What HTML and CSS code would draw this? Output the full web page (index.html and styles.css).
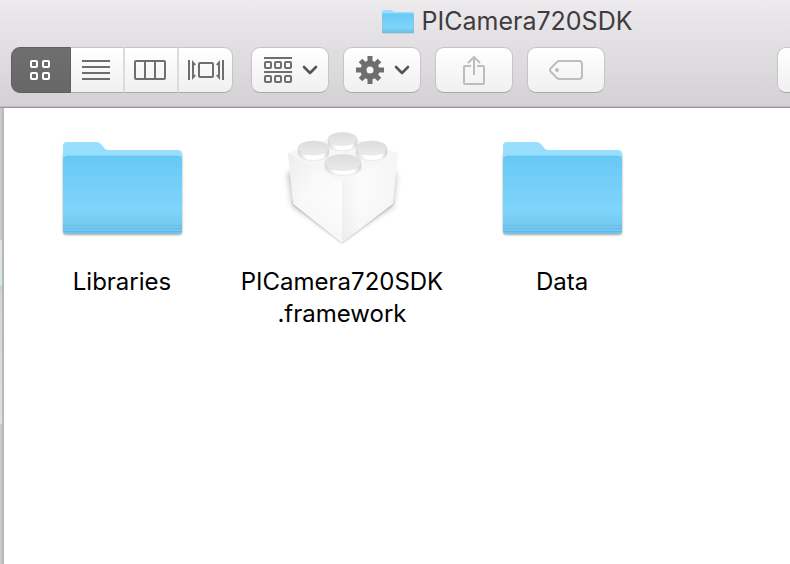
FILE: index.html
```html
<!DOCTYPE html>
<html lang="en">
<head>
<meta charset="utf-8">
<title>PICamera720SDK</title>
<link rel="stylesheet" href="styles.css">
</head>
<body>
<svg class="defs" aria-hidden="true">
  <defs>
    <linearGradient id="front" x1="0" y1="0" x2="0" y2="1">
      <stop offset="0" stop-color="#68c9f5"/>
      <stop offset=".7" stop-color="#7fd4fa"/>
      <stop offset="1" stop-color="#6fc3ec"/>
    </linearGradient>
    <linearGradient id="left" x1="0" y1="0" x2="1" y2="1">
      <stop offset="0" stop-color="#ececec"/>
      <stop offset=".4" stop-color="#f9f9f9"/>
      <stop offset="1" stop-color="#fff"/>
    </linearGradient>
    <linearGradient id="right" x1="0" y1="0" x2="1" y2="0">
      <stop offset="0" stop-color="#f2f2f2"/>
      <stop offset=".3" stop-color="#fcfcfc"/>
      <stop offset="1" stop-color="#f5f5f5"/>
    </linearGradient>
    <linearGradient id="foot" x1="0" y1="0" x2="0" y2="1">
      <stop offset=".5" stop-color="#ddd" stop-opacity="0"/>
      <stop offset="1" stop-color="#d6d6d6" stop-opacity=".6"/>
    </linearGradient>
    <linearGradient id="stud" x1="0" y1="0" x2="0" y2="1">
      <stop offset="0" stop-color="#dcdcdc"/>
      <stop offset="1" stop-color="#ebebeb"/>
    </linearGradient>
    <linearGradient id="side" x1="0" y1="0" x2="1" y2="0">
      <stop offset="0" stop-color="#d6d6d6"/>
      <stop offset=".3" stop-color="#fff"/>
      <stop offset=".8" stop-color="#fff"/>
      <stop offset="1" stop-color="#cecece"/>
    </linearGradient>
    <filter id="soft" x="-20%" y="-20%" width="140%" height="140%"><feGaussianBlur stdDeviation="3"/></filter>
    <filter id="edge" x="-20%" y="-20%" width="140%" height="140%"><feGaussianBlur stdDeviation="1"/></filter>
    <symbol id="folder" viewBox="0 0 128 128">
      <path d="M5 30h119v78q0 3-3 3H8q-3 0-3-3z" fill="#000" opacity=".35" filter="url(#edge)"/>
      <path d="M5 36V22q0-4 4-4h29q3 0 5 2l4 5q1 1 4 1h69q4 0 4 4v10H5z" fill="#98deff"/>
      <path d="M5 36q0-4 4-4h111q4 0 4 4v71q0 3-4 3H9q-4 0-4-3z" fill="url(#front)"/>
      <path d="M6 35q1-3 4-3h109q3 0 4 3" fill="none" stroke="#62bfe9" opacity=".6"/>
      <path d="M5 101.500h119M5 104.500h119M5 107.500h119" stroke="#58afd8" opacity=".45"/>
    </symbol>
    <symbol id="brick" viewBox="0 0 128 128">
      <path d="M10 48L15 82l49 32 51-32 3-34z" fill="#000" opacity=".28" filter="url(#soft)"/>
      <path d="M15 80l49 39 51-39-1-4H15z" fill="#000" opacity=".35" filter="url(#edge)"/>
      <path d="M10 29L64 10l56 19-56 30z" fill="#f6f6f6"/>
      <path d="M10 29l54 29v61L15 80z" fill="url(#left)"/>
      <path d="M120 29L64 58v61l51-39z" fill="url(#right)"/>
      <path d="M10 29l54 29 56-29-5 51-51 39-49-39z" fill="url(#foot)" opacity=".35"/>
      <g stroke="#d8d8d8" stroke-width=".5">
        <path d="M50 15v5c0 9 29 9 29 0v-5z" fill="url(#side)"/>
        <ellipse cx="64.500" cy="15" rx="14.500" ry="6.500" fill="url(#stud)"/>
        <path d="M20 24v5c0 10 31 10 31 0v-5z" fill="url(#side)"/>
        <ellipse cx="35.500" cy="24" rx="15.500" ry="7" fill="url(#stud)"/>
        <path d="M78 24v5c0 10 31 10 31 0v-5z" fill="url(#side)"/>
        <ellipse cx="93.500" cy="24" rx="15.500" ry="7" fill="url(#stud)"/>
        <path d="M47 38v5c0 11 36 11 36 0v-5z" fill="url(#side)"/>
        <ellipse cx="65" cy="38.500" rx="18" ry="8" fill="url(#stud)"/>
      </g>
    </symbol>
    <symbol id="chevron" viewBox="0 0 16 10"><path d="M2 2l6 6 6-6" fill="none" stroke="#555" stroke-width="2.600" stroke-linecap="round" stroke-linejoin="round"/></symbol>
  </defs>
</svg>

<header class="titlebar">
  <h1 class="title">
    <svg class="title-icon" viewBox="4 14 121 100" preserveAspectRatio="none" aria-hidden="true"><use href="#folder" width="128" height="128"/></svg>
    PICamera720SDK
  </h1>
  <div class="toolbar">
    <div class="segments">
      <button class="segment active" type="button" aria-label="Icon view">
        <svg width="20" height="20" viewBox="0 0 20 20" fill="none" stroke="#fff" stroke-width="2"><rect x="1" y="1" width="6" height="6" rx="1"/><rect x="13" y="1" width="6" height="6" rx="1"/><rect x="1" y="13" width="6" height="6" rx="1"/><rect x="13" y="13" width="6" height="6" rx="1"/></svg>
      </button>
      <button class="segment" type="button" aria-label="List view">
        <svg width="28" height="20" viewBox="0 0 28 20" stroke="#6e6e6e" stroke-width="2"><path d="M0 1h28M0 7h28M0 13h28M0 19h28"/></svg>
      </button>
      <button class="segment" type="button" aria-label="Column view">
        <svg width="32" height="20" viewBox="0 0 32 20" fill="none" stroke="#6e6e6e" stroke-width="2"><rect x="1" y="1" width="30" height="18" rx="1"/><path d="M11 1v18M21 1v18"/></svg>
      </button>
      <button class="segment" type="button" aria-label="Cover Flow">
        <svg width="36" height="20" viewBox="0 0 36 20" fill="none" stroke="#6e6e6e" stroke-width="2"><path d="M1 0v20M35 0v20"/><rect x="11" y="3" width="14" height="14" rx="1"/><path d="M4 0l4 4.500-2 1v9l2 1L4 20zM32 0l-4 4.500 2 1v9l-2 1 4 4.500z" fill="#6e6e6e" stroke="none"/></svg>
      </button>
    </div>
    <button class="button menu" type="button" aria-label="Arrange items">
      <svg width="28" height="26" viewBox="0 0 28 26" fill="none" stroke="#6e6e6e" stroke-width="2"><path d="M0 1h28M0 15h28"/><rect x="1" y="5" width="6" height="6" rx="1"/><rect x="11" y="5" width="6" height="6" rx="1"/><rect x="21" y="5" width="6" height="6" rx="1"/><rect x="1" y="19" width="6" height="6" rx="1"/><rect x="11" y="19" width="6" height="6" rx="1"/><rect x="21" y="19" width="6" height="6" rx="1"/></svg>
      <svg width="16" height="10"><use href="#chevron"/></svg>
    </button>
    <button class="button menu" type="button" aria-label="Action">
      <svg width="28" height="28" viewBox="0 0 28 28"><g stroke="#6e6e6e" stroke-width="5"><path d="M14 0v9M14 19v9M0 14h9M19 14h9"/><path d="M4.500 4.500l6 6M17.500 17.500l6 6M23.500 4.500l-6 6M10.500 17.500l-6 6"/></g><circle cx="14" cy="14" r="6.500" fill="none" stroke="#6e6e6e" stroke-width="6"/></svg>
      <svg width="16" height="10"><use href="#chevron"/></svg>
    </button>
    <button class="button" type="button" aria-label="Share" disabled>
      <svg width="22" height="30" viewBox="0 0 22 30" fill="none" stroke="#bdbdbd" stroke-width="2"><path d="M8 11H2q-1 0-1 1v16q0 1 1 1h18q1 0 1-1V12q0-1-1-1h-6M11 20V2M5 8l6-6 6 6"/></svg>
    </button>
    <button class="button" type="button" aria-label="Tags" disabled>
      <svg width="34" height="20" viewBox="0 0 34 20" fill="none" stroke="#bdbdbd" stroke-width="2"><path d="M11 1h19q3 0 3 3v12q0 3-3 3H11q-2 0-3-1l-6-6q-2-2 0-4l6-6q1-1 3-1z"/><circle cx="8" cy="10" r="2" fill="#bdbdbd" stroke="none"/></svg>
    </button>
    <input class="search" type="search" aria-label="Search">
  </div>
</header>
<div class="window">
  <div class="backdrop"></div>
  <main class="files">
    <figure class="file"><svg class="file-icon" aria-hidden="true"><use href="#folder"/></svg><figcaption>Libraries</figcaption></figure>
    <figure class="file"><svg class="file-icon" aria-hidden="true"><use href="#brick"/></svg><figcaption>PICamera720SDK<br>.framework</figcaption></figure>
    <figure class="file"><svg class="file-icon" aria-hidden="true"><use href="#folder"/></svg><figcaption>Data</figcaption></figure>
  </main>
</div>
</body>
</html>
```
FILE: styles.css
```css
* {
  box-sizing: border-box;
}

body {
  margin: 0;
  min-height: 100vh;
  display: flex;
  flex-direction: column;
  background: #fff;
  color: #000;
  font-family: Inter, Roboto, sans-serif;
}

.defs {
  position: absolute;
  width: 0;
  height: 0;
}

.titlebar {
  background: linear-gradient(#eceaec, #d3d1d3);
  border-bottom: 1px solid #979597;
  box-shadow: inset 0 -1px #bebcbe;
}

.title {
  display: flex;
  align-items: center;
  justify-content: center;
  gap: 8px;
  height: 42px;
  margin: 0;
  padding-left: 224px;
  color: #3e3c3e;
  font-size: 25px;
  font-weight: 400;
  white-space: nowrap;
}

.title-icon {
  width: 32px;
  height: 25px;
}

.toolbar {
  display: flex;
  gap: 14px;
  padding: 5px 0 14px 11px;
}

.segments {
  display: flex;
  flex: none;
  margin-right: 4px;
}

.segment,
.button,
.search {
  display: flex;
  flex: none;
  align-items: center;
  justify-content: center;
  height: 46px;
  margin: 0;
  padding: 0;
  border: 1px solid #c6c4c6;
  border-bottom-color: #a9a7a9;
  background: linear-gradient(#fff, #f0f0f0);
}

.segment {
  width: 54px;
  padding-right: 2px;
  border-left-width: 0;
}

.segment:not(:last-child) {
  border-right: 2px solid #dcdcdc;
}

.segment.active {
  width: 60px;
  border: 1px solid #5e5e5e;
  border-radius: 9px 0 0 9px;
  background: linear-gradient(#6f6f6f, #676767);
}

.segment:last-child {
  padding-right: 0;
  border-radius: 0 9px 9px 0;
}

.button {
  width: 78px;
  border-radius: 9px;
}

.menu {
  gap: 10px;
  padding-left: 2px;
}

.search {
  flex: 1;
  min-width: 0;
  margin-left: 158px;
  border-right: 0;
  border-radius: 9px 0 0 9px;
}

.window {
  display: flex;
  flex: 1;
}

.backdrop {
  width: 4px;
  border-right: 2px solid #b8b8b8;
  background: linear-gradient(#c9c9c9 132px, #e2e4e4 132px, #d9e5e5 160px, #cdeceb 176px, #c8c8c8 180px, #d4d4d4 182px, #e0e0e0 316px, #c9c9c9 316px);
}

.files {
  display: grid;
  grid-template-columns: repeat(auto-fill, 220px);
  align-content: start;
  flex: 1;
  padding: 16px 8px;
}

.file {
  display: flex;
  flex-direction: column;
  align-items: center;
  gap: 14px;
  margin: 0;
  font-size: 24px;
  line-height: 32px;
  text-align: center;
}

.file-icon {
  width: 128px;
  height: 128px;
}
```
